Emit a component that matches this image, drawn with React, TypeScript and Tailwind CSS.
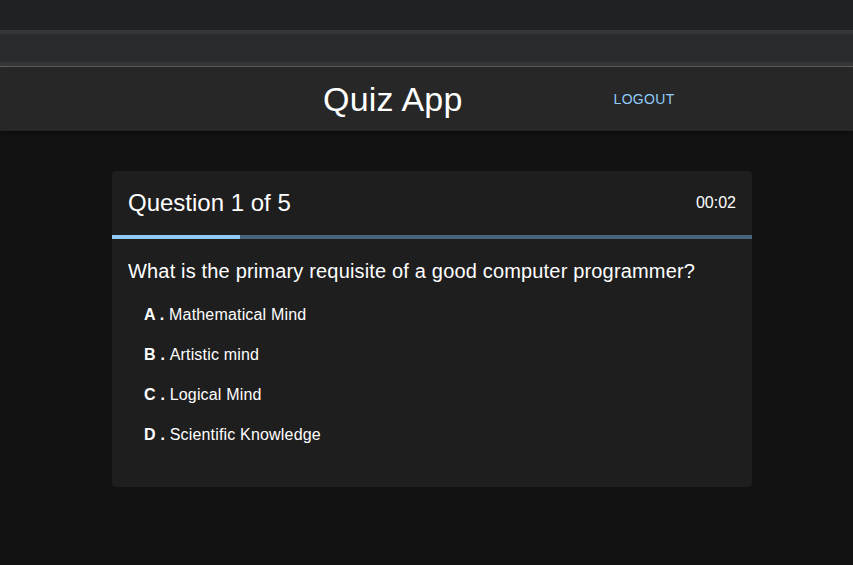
export default function App() {
  const options = [
    ["A", "Mathematical Mind"],
    ["B", "Artistic mind"],
    ["C", "Logical Mind"],
    ["D", "Scientific Knowledge"],
  ];
  return (
    <div
      className="w-[853px] h-[565px] bg-[#121212] text-white flex flex-col overflow-hidden"
      style={{ fontFamily: '"Liberation Sans", Arial, sans-serif' }}
    >
      <div className="h-[30px] bg-[#202124]" />
      <div className="h-[4px] bg-[#35363a]" />
      <div className="h-[28px] bg-[#292a2d]" />
      <div className="h-[4px] bg-[#35363a]" />
      <div className="h-[1px] bg-[#5f5f5f]" />
      <header className="h-[64px] bg-[#272727] flex items-center pl-[323px] shadow-[0_2px_4px_rgba(0,0,0,0.4)]">
        <h1 className="text-[34px] leading-[40px] font-normal tracking-[0.2px]">Quiz App</h1>
        <button className="ml-[143px] px-2 py-1.5 text-[14px] leading-[24px] tracking-[0.3px] uppercase text-[#90caf9] font-normal">
          Logout
        </button>
      </header>
      <main className="flex pl-[112px] pt-[40px]">
        <div className="w-[640px] bg-[#1e1e1e] rounded-[4px] overflow-hidden pb-[32px]">
          <div className="h-[64px] flex items-center justify-between px-4">
            <span className="text-[24px] leading-[32px]">Question 1 of 5</span>
            <span className="text-[16px] leading-[24px]">00:02</span>
          </div>
          <div className="h-[4px] bg-[#48657d]">
            <div className="h-full w-[128px] bg-[#90caf9]" />
          </div>
          <div className="px-4 pt-4">
            <p className="text-[20px] leading-[32px] tracking-[0.17px]">
              What is the primary requisite of a good computer programmer?
            </p>
            <ul className="mt-[8px]">
              {options.map(([l, t]) => (
                <li key={l} className="h-[40px] flex items-center pl-4 text-[16px] tracking-[0.18px]">
                  <span className="font-bold whitespace-pre">{l} . </span>
                  <span>{t}</span>
                </li>
              ))}
            </ul>
          </div>
        </div>
      </main>
    </div>
  );
}
